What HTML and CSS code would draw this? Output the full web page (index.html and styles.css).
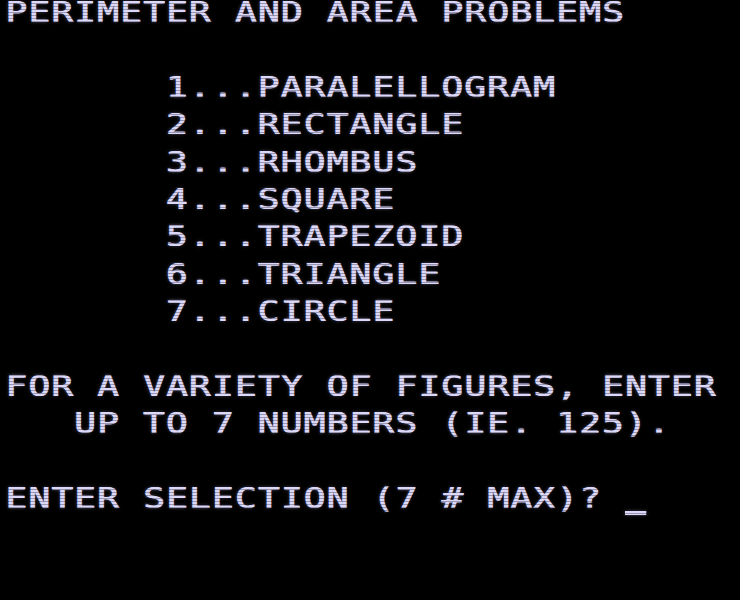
FILE: index.html
```html
<!DOCTYPE html>
<html lang="en">
<head>
    <meta charset="UTF-8">
    <meta name="viewport" content="width=device-width, initial-scale=1.0">
    <title>Perimeter and Area Problems</title>
    <link rel="stylesheet" href="styles.css">
</head>
<body>

    <div class="screen">
        <div class="text">
            <div class="title">PERIMETER AND AREA PROBLEMS</div>

            <ol class="menu">
                <li>1...PARALELLOGRAM</li>
                <li>2...RECTANGLE</li>
                <li>3...RHOMBUS</li>
                <li>4...SQUARE</li>
                <li>5...TRAPEZOID</li>
                <li>6...TRIANGLE</li>
                <li>7...CIRCLE</li>
            </ol>

            <div class="note">
                <div>FOR A VARIETY OF FIGURES, ENTER</div>
                <div class="indent">UP TO 7 NUMBERS (IE. 125).</div>
            </div>

            <div class="prompt">ENTER SELECTION (7 # MAX)? <span class="cursor"></span></div>
        </div>
    </div>

</body>
</html>
```

FILE: styles.css
```css
body {
    margin: 0;
    background-color: black;
    overflow: hidden;
}
.screen {
    position: relative;
    height: 600px;
    overflow: hidden;
}
/* scanlines over the whole screen */
.screen::after {
    content: "";
    position: absolute;
    inset: 0;
    background: repeating-linear-gradient(
        to bottom,
        rgba(0, 0, 0, 0.3) 0,
        rgba(0, 0, 0, 0.3) 1px,
        transparent 1px,
        transparent 3px
    );
    pointer-events: none;
}
/* the 40-column font is wide, so stretch the mono face sideways */
.text {
    transform: scaleX(1.25);
    transform-origin: left top;
    padding-left: 4px;
    font-family: "DejaVu Sans Mono", monospace;
    font-weight: normal;
    font-size: 29px;
    line-height: 37.4px;
    letter-spacing: 0.9px;
    color: #dcd8fa;
    text-shadow: 0.8px 0 0 #dcd8fa, 0 0 3px rgba(200, 196, 255, 0.45);
    white-space: nowrap;
}
.title {
    margin-top: -6px;
    margin-bottom: 37.4px;
}
.menu {
    list-style: none;
    margin: 0 0 37.4px 0;
    padding: 0 0 0 128.4px;
}
.note {
    margin-bottom: 37.4px;
}
.indent {
    padding-left: 55px;
}
.cursor {
    display: inline-block;
    width: 16.8px;
    height: 4px;
    background-color: #dcd8fa;
    box-shadow: 0 0 3px rgba(200, 196, 255, 0.45);
    vertical-align: -7px;
}
```
